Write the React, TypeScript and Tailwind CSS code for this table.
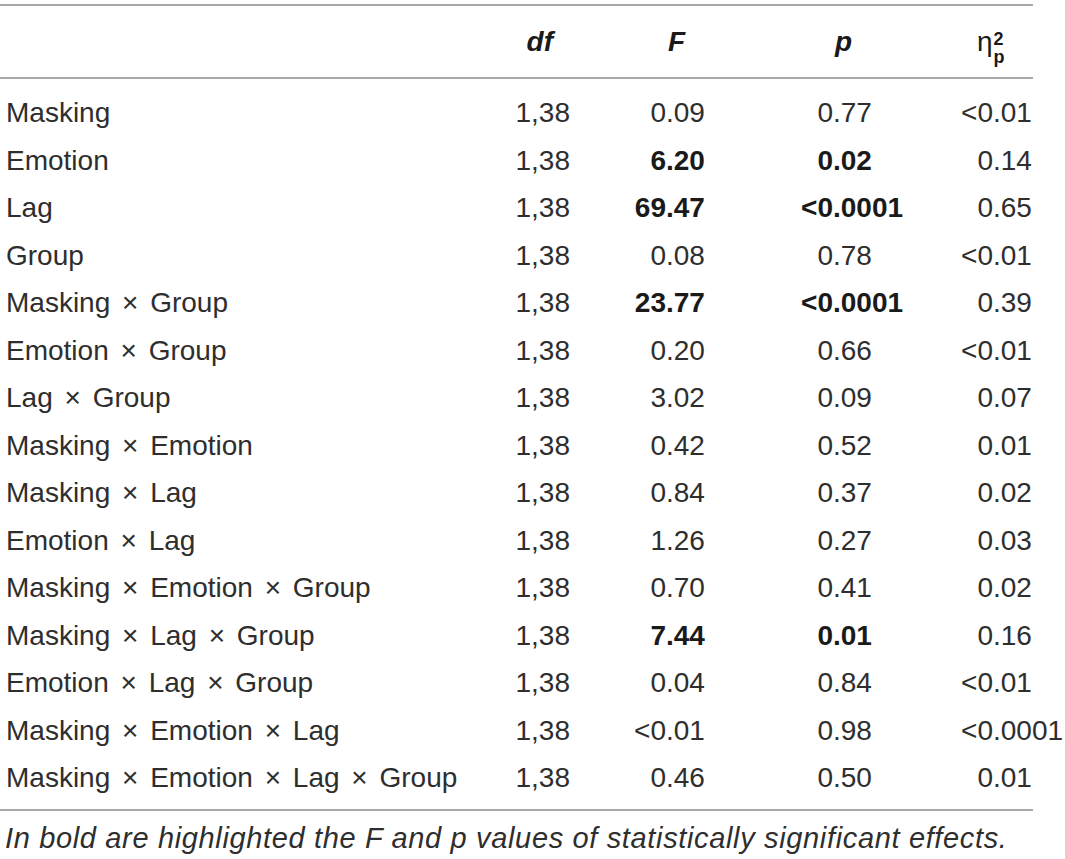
import React from "react";

type Row = { label: string; df: string; f: string; p: string; eta: string; fb?: boolean; pb?: boolean };

const rows: Row[] = [
  { label: "Masking", df: "1,38", f: "0.09", p: "0.77", eta: "<0.01" },
  { label: "Emotion", df: "1,38", f: "6.20", p: "0.02", eta: "0.14", fb: true, pb: true },
  { label: "Lag", df: "1,38", f: "69.47", p: "<0.0001", eta: "0.65", fb: true, pb: true },
  { label: "Group", df: "1,38", f: "0.08", p: "0.78", eta: "<0.01" },
  { label: "Masking × Group", df: "1,38", f: "23.77", p: "<0.0001", eta: "0.39", fb: true, pb: true },
  { label: "Emotion × Group", df: "1,38", f: "0.20", p: "0.66", eta: "<0.01" },
  { label: "Lag × Group", df: "1,38", f: "3.02", p: "0.09", eta: "0.07" },
  { label: "Masking × Emotion", df: "1,38", f: "0.42", p: "0.52", eta: "0.01" },
  { label: "Masking × Lag", df: "1,38", f: "0.84", p: "0.37", eta: "0.02" },
  { label: "Emotion × Lag", df: "1,38", f: "1.26", p: "0.27", eta: "0.03" },
  { label: "Masking × Emotion × Group", df: "1,38", f: "0.70", p: "0.41", eta: "0.02" },
  { label: "Masking × Lag × Group", df: "1,38", f: "7.44", p: "0.01", eta: "0.16", fb: true, pb: true },
  { label: "Emotion × Lag × Group", df: "1,38", f: "0.04", p: "0.84", eta: "<0.01" },
  { label: "Masking × Emotion × Lag", df: "1,38", f: "<0.01", p: "0.98", eta: "<0.0001" },
  { label: "Masking × Emotion × Lag × Group", df: "1,38", f: "0.46", p: "0.50", eta: "0.01" },
];

function Label({ text }: { text: string }) {
  const parts = text.split(" × ");
  return (
    <div className="pl-[6px] whitespace-nowrap">
      {parts.map((p, i) => (
        <React.Fragment key={i}>
          {i > 0 && <span className="mx-[4px]"> × </span>}
          {p}
        </React.Fragment>
      ))}
    </div>
  );
}

function Num({ v, intW, bold }: { v: string; intW: string; bold?: boolean }) {
  const i = v.indexOf(".");
  const a = v.slice(0, i);
  const b = v.slice(i);
  return (
    <div className={"flex whitespace-nowrap " + (bold ? "font-bold text-[#1a1a1a]" : "")}>
      <span className={intW + " text-right shrink-0"}>{a}</span>
      <span>{b}</span>
    </div>
  );
}

export default function App() {
  return (
    <div
      className="w-[1065px] h-[859px] bg-white text-[#2e2e2e] text-[28px] overflow-hidden"
      style={{ fontFamily: '"Liberation Sans", Arial, sans-serif' }}
    >
      <div className="w-[1033px] pt-[4px]">
        <div className="h-[2px] bg-[#a8a8a8]" />
        <div className="grid grid-cols-[500px_70px_170px_170px_123px] h-[71px] pt-[16px] leading-[40px] font-bold italic text-[#1a1a1a]">
          <div />
          <div className="text-right pr-[17px]">df</div>
          <div className="pl-[98px]">F</div>
          <div className="pl-[95px]">p</div>
          <div className="pl-[67px] not-italic font-normal flex items-start whitespace-nowrap">
            <span className="leading-[40px] text-[28px] font-light">η</span>
            <span className="flex flex-col font-bold text-[18px] leading-[18px] mt-[8px] ml-[1px]">
              <span>2</span>
              <span>p</span>
            </span>
          </div>
        </div>
        <div className="h-[2px] bg-[#a8a8a8]" />
        <div className="pt-[10px] pb-[7px]">
          {rows.map((r) => (
            <div
              key={r.label}
              className="grid grid-cols-[500px_70px_170px_170px_123px] h-[47.5px] leading-[47.5px]"
            >
              <Label text={r.label} />
              <div className="text-right">{r.df}</div>
              <Num v={r.f} intW="w-[96px]" bold={r.fb} />
              <Num v={r.p} intW="w-[93px]" bold={r.pb} />
              <Num v={r.eta} intW="w-[83px]" />
            </div>
          ))}
        </div>
        <div className="h-[2px] bg-[#a8a8a8]" />
        <div className="pt-[9px] pl-[5px] italic text-[29px] tracking-[0.65px] leading-[36px] whitespace-nowrap">
          In bold are highlighted the F and p values of statistically significant effects.
        </div>
      </div>
    </div>
  );
}
